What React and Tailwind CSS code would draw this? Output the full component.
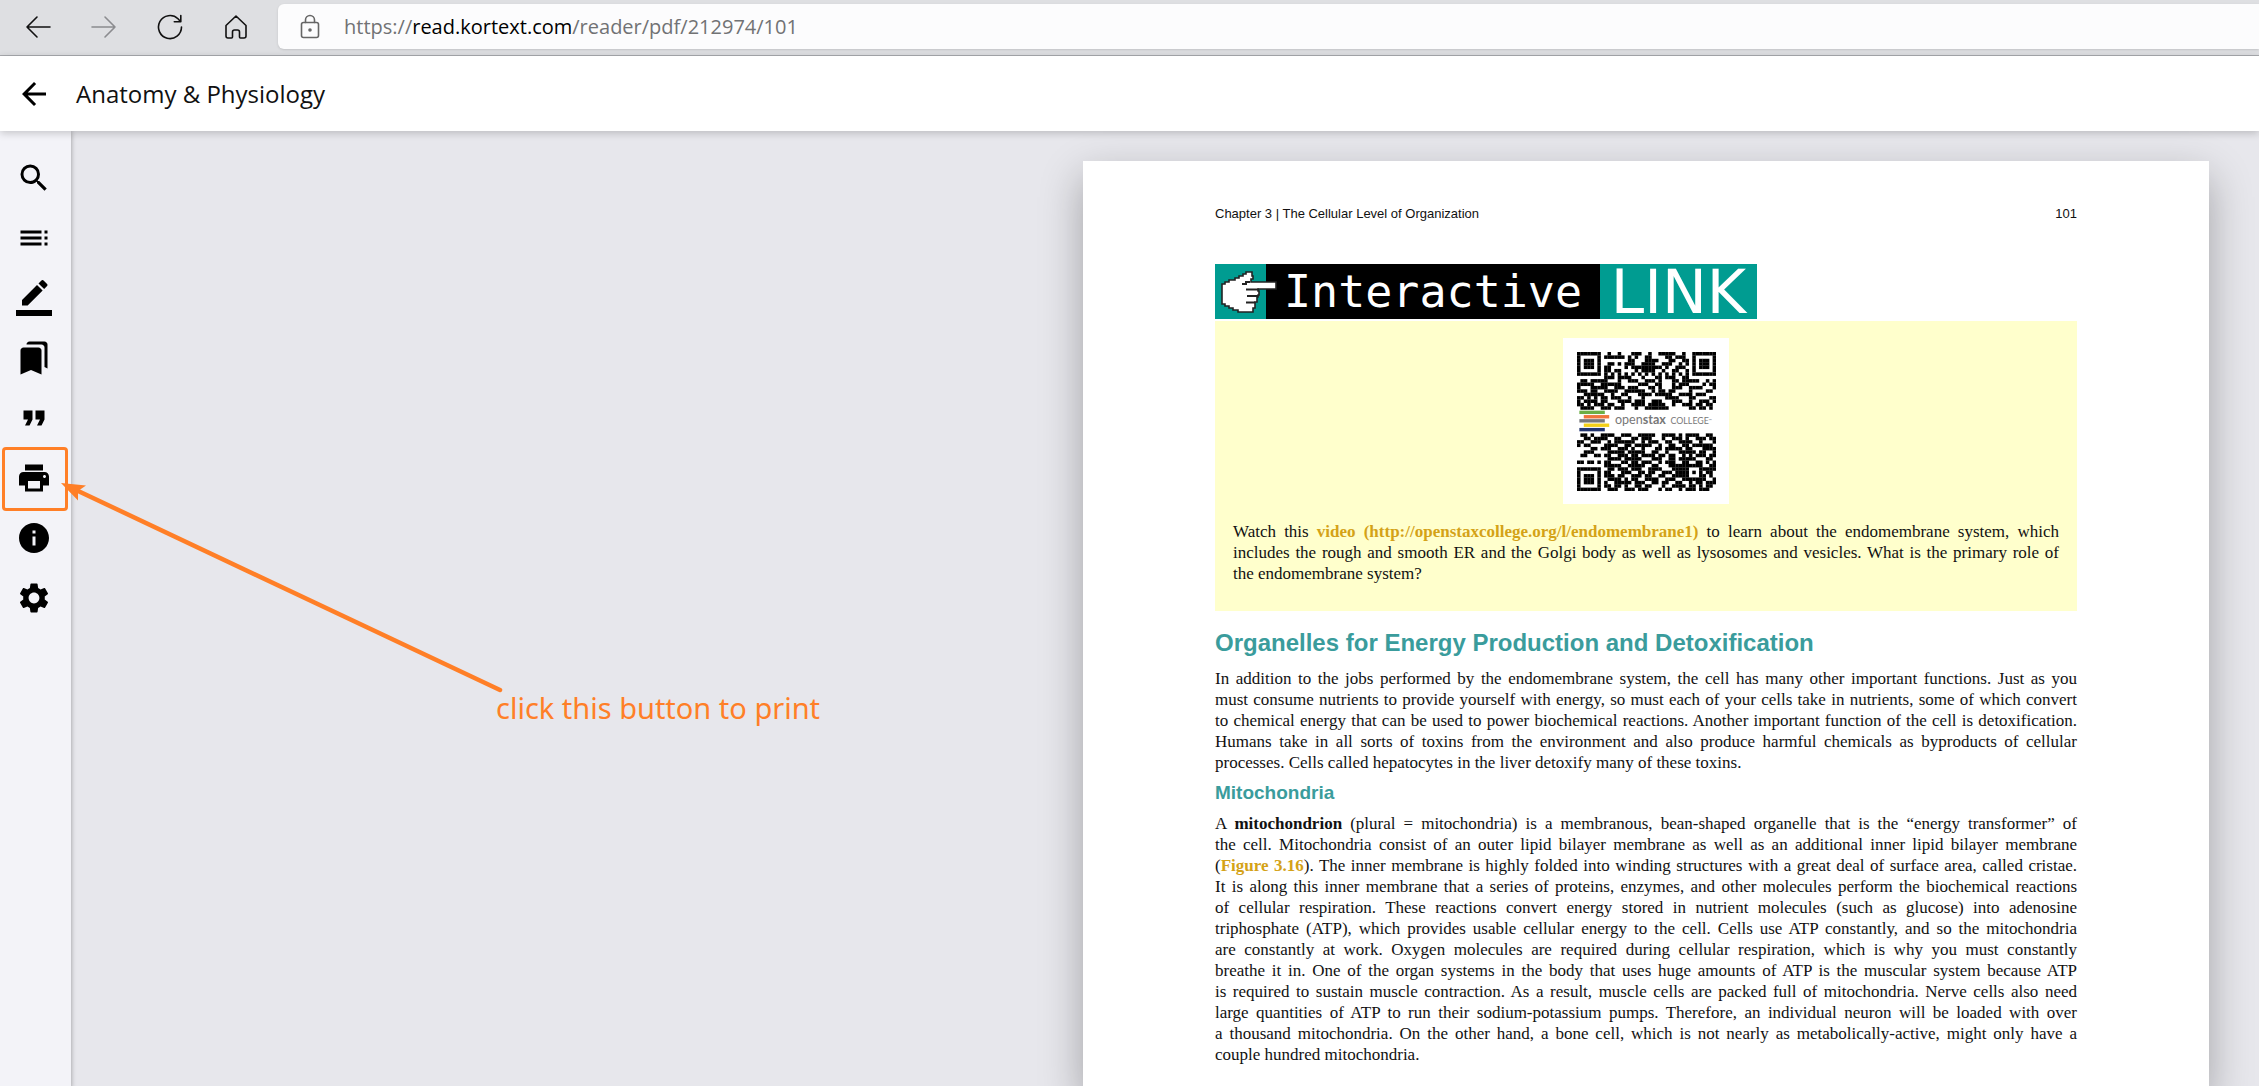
import {
  MdSearch,
  MdToc,
  MdBookmarks,
  MdFormatQuote,
  MdPrint,
  MdInfo,
  MdSettings,
  MdArrowBack,
} from "react-icons/md";

function PenIcon({ className }) {
  return (
    <svg viewBox="0 0 24 24" className={className} fill="currentColor" aria-hidden="true">
      <path d="M17.750 7 14 3.250l-10 10V17h3.750l10-10zm2.960-2.960c.39-.39.39-1.020 0-1.410L18.370.29c-.39-.39-1.020-.39-1.410 0L15 2.250 18.750 6l1.960-1.960z" />
      <path d="M0 20h24v4H0z" />
    </svg>
  );
}

const tools = [
  { label: "Search", Icon: MdSearch },
  { label: "Contents", Icon: MdToc },
  { label: "Highlights", Icon: PenIcon },
  { label: "Bookmarks", Icon: MdBookmarks },
  { label: "Cite", Icon: MdFormatQuote },
  { label: "Print", Icon: MdPrint },
  { label: "Info", Icon: MdInfo },
  { label: "Settings", Icon: MdSettings },
];

const QR_TOP = [
  "11111110010010001110010011111001001111111",
  "10000010111111010100110000110111001000001",
  "10111010000000011000111100011001101011101",
  "10111010011010111001111001110010101011101",
  "10111010110000101111111110100111001011101",
  "10000010110110000101111001001100101000001",
  "11111110101010101010101010101010101111111",
  "00000000111011110001000110111001100000000",
  "01101111100010011100111010001101111100101",
  "11111001111110000011100110001011100001011",
  "10001111100111011100011010001110011110001",
  "11101100111100111111001011011000010000110",
  "00111111001001100011110111110011110111000",
  "11010101101110010001000000111100011000011",
  "10111101100011110111001110001110010011101",
  "11010111011001001111011111001001110110110",
  "01111001110111000100111111100000011011010",
];

const QR_BOTTOM = [
  "01101001111001110011111001111010111100110",
  "00110111100110001101110001001110100111011",
  "11001110010111111001011100110011110010001",
  "10110000111100110111110010011001101111110",
  "00001101110011101001000110111110110001111",
  "00111000011111011111001100100011111011001",
  "01100110110011101101111011011001010111011",
  "00000000011110111110001110011011111000110",
  "11011010110001101101110010111001100110101",
  "00000000111110011111001100011111111110011",
  "11111110011011101110011110001111100011111",
  "10000010110001110011011001110111101010110",
  "10111010111011001110110011001111100011010",
  "10111010011110101100111100111001111111001",
  "10111010100111110111001101100110010110111",
  "10000010110110100110110001001111011010110",
  "11111110011100111011100010110010111011100",
];

function QrCode() {
  const row = (line, y) =>
    [...line].map((c, x) => (c === "1" ? <rect key={`${x}-${y}`} x={x} y={y} width="1.04" height="1.04" /> : null));
  return (
    <svg viewBox="0 0 41 41" className="block h-[139px] w-[139px]" role="img" aria-label="QR code">
      {QR_TOP.map((line, i) => row(line, i))}
      {QR_BOTTOM.map((line, i) => row(line, i + 24))}
      <rect x="0.7" y="17.3" width="7.5" height="1" fill="#6cae45" />
      <rect x="2" y="18.6" width="7.5" height="1" fill="#f0743c" />
      <rect x="0.7" y="19.8" width="7.5" height="1" fill="#77787b" />
      <rect x="2" y="21.1" width="7.5" height="1" fill="#f4d019" />
      <rect x="0.7" y="22.4" width="7.5" height="1" fill="#22356f" />
      <text x="11.2" y="21.3" fontSize="3.7" fill="#777" fontFamily="Lato, sans-serif">
        open<tspan fontWeight="700">stax</tspan>
      </text>
      <text x="27.6" y="21.3" fontSize="2.6" fill="#777" fontFamily="Lato, sans-serif">
        COLLEGE<tspan fontSize="1.2" dy="-0.8">™</tspan>
      </text>
    </svg>
  );
}

function Hand() {
  return (
    <svg viewBox="0 0 57 44" className="absolute top-[7px] left-[6px] h-11 w-[57px]" aria-hidden="true">
      <path
        d="M1 13H4V11H8V9H14V7H18V5H22V3H25V1H31V5H32V8H30V11H55V18H37V20H38V24H37V26H36V31H34V37H32V41H17V39H12V37H8V35H4V33H1Z"
        fill="#fff"
        stroke="#222"
        strokeWidth="1.6"
      />
      <path d="M25 18.500h13M26 25h11M25 31.500h9M29 11h-4v2h-4" fill="none" stroke="#222" strokeWidth="2" />
    </svg>
  );
}

function BrowserBar() {
  const line = { fill: "none", stroke: "currentColor", strokeWidth: 1.6, strokeLinecap: "round", strokeLinejoin: "round" };
  return (
    <div className="flex h-14 items-center border-b border-[#a9abaf] bg-[#dedfe2] pb-0.5 pl-[5px] text-[#111]">
      <button type="button" aria-label="Back" className="flex w-[66px] justify-center">
        <svg viewBox="0 0 26 26" className="size-[26px]" {...line}>
          <path d="M25 13H2M12 3 2 13l10 10" />
        </svg>
      </button>
      <button type="button" aria-label="Forward" className="flex w-[66px] justify-center text-[#8b8c8f]">
        <svg viewBox="0 0 26 26" className="size-[26px]" {...line}>
          <path d="M1 13h23M14 3l10 10-10 10" />
        </svg>
      </button>
      <button type="button" aria-label="Refresh" className="flex w-[66px] justify-center">
        <svg viewBox="0 0 26 26" className="size-[26px]" {...line}>
          <path d="M24.500 13a11.500 11.500 0 1 1-3.500-8.200L23.500 7.500M23.800 1.500v6.200h-6.500" />
        </svg>
      </button>
      <button type="button" aria-label="Home" className="flex w-[66px] justify-center">
        <svg viewBox="0 0 26 26" className="size-[26px]" {...line}>
          <path d="M3 11.500 13 2l10 9.500V22q0 2-2 2h-3.500q-1 0-1-1v-5q0-2-2-2h-3q-2 0-2 2v5q0 1-1 1H5q-2 0-2-2z" />
        </svg>
      </button>
      <div className="ml-[9px] flex h-[45px] flex-1 items-center rounded-l-md bg-[#fcfcfd] pl-5 shadow-sm">
        <svg viewBox="0 0 24 26" className="h-[26px] w-6 text-[#666]" {...line}>
          <rect x="3.500" y="8.500" width="17" height="15" rx="2" />
          <path d="M7.500 8.500V6a4.500 4.500 0 0 1 9 0v2.500" />
          <circle cx="12" cy="16" r="1" fill="currentColor" />
        </svg>
        <p className="ml-[22px] font-['Open_Sans',sans-serif] text-[20px] text-[#717274]">
          https://<span className="text-black">read.kortext.com</span>/reader/pdf/212974/101
        </p>
      </div>
    </div>
  );
}

function Sidebar() {
  return (
    <nav className="relative z-10 flex w-[71px] shrink-0 flex-col bg-[#f3f3f8] pt-[17px] pr-1 shadow-[0_0_5px_rgba(0,0,0,0.35)]">
      {tools.map(({ label, Icon }) => (
        <button key={label} type="button" aria-label={label} className="flex h-[60px] items-center justify-center text-black">
          <Icon className="size-9" />
        </button>
      ))}
    </nav>
  );
}

function Annotation() {
  return (
    <div className="pointer-events-none absolute inset-0 z-20 text-[#ff7f27]">
      <div className="absolute top-[316px] left-[2px] h-[64px] w-[66px] rounded-sm border-3 border-[#ff7f27]" />
      <svg viewBox="0 0 450 220" className="absolute top-[344px] left-[58px] h-[220px] w-[450px]" aria-hidden="true">
        <path d="M18 15 442 215" stroke="currentColor" strokeWidth="4.500" strokeLinecap="round" />
        <path d="M3 8 28 10.500 20 16 20 25.500Z" fill="currentColor" />
      </svg>
      <p className="absolute top-[556px] left-[496px] font-['Noto_Sans',sans-serif] text-[29px] leading-[42px] whitespace-nowrap">
        click this button to print
      </p>
    </div>
  );
}

// The book's own line breaks are kept, every line but the last is justified
function Lines({ className = "", lines }) {
  return (
    <p className={className}>
      {lines.map((line, i) => (
        <span key={i} className={i < lines.length - 1 ? "block text-justify [text-align-last:justify]" : "block"}>
          {line}
        </span>
      ))}
    </p>
  );
}

const introLines = [
  "In addition to the jobs performed by the endomembrane system, the cell has many other important functions. Just as you",
  "must consume nutrients to provide yourself with energy, so must each of your cells take in nutrients, some of which convert",
  "to chemical energy that can be used to power biochemical reactions. Another important function of the cell is detoxification.",
  "Humans take in all sorts of toxins from the environment and also produce harmful chemicals as byproducts of cellular",
  "processes. Cells called hepatocytes in the liver detoxify many of these toxins.",
];

const videoLines = [
  <>
    Watch this{" "}
    <a href="http://openstaxcollege.org/l/endomembrane1" className="font-bold text-[#d4a217]">
      video (http://openstaxcollege.org/l/endomembrane1)
    </a>{" "}
    to learn about the endomembrane system, which
  </>,
  "includes the rough and smooth ER and the Golgi body as well as lysosomes and vesicles. What is the primary role of",
  "the endomembrane system?",
];

const mitochondriaLines = [
  <>
    A <b>mitochondrion</b> (plural = mitochondria) is a membranous, bean-shaped organelle that is the “energy transformer” of
  </>,
  "the cell. Mitochondria consist of an outer lipid bilayer membrane as well as an additional inner lipid bilayer membrane",
  <>
    (
    <a href="#figure-3-16" className="font-bold text-[#d4a217]">
      Figure 3.16
    </a>
    ). The inner membrane is highly folded into winding structures with a great deal of surface area, called cristae.
  </>,
  "It is along this inner membrane that a series of proteins, enzymes, and other molecules perform the biochemical reactions",
  "of cellular respiration. These reactions convert energy stored in nutrient molecules (such as glucose) into adenosine",
  "triphosphate (ATP), which provides usable cellular energy to the cell. Cells use ATP constantly, and so the mitochondria",
  "are constantly at work. Oxygen molecules are required during cellular respiration, which is why you must constantly",
  "breathe it in. One of the organ systems in the body that uses huge amounts of ATP is the muscular system because ATP",
  "is required to sustain muscle contraction. As a result, muscle cells are packed full of mitochondria. Nerve cells also need",
  "large quantities of ATP to run their sodium-potassium pumps. Therefore, an individual neuron will be loaded with over",
  "a thousand mitochondria. On the other hand, a bone cell, which is not nearly as metabolically-active, might only have a",
  "couple hundred mitochondria.",
];

function BookPage() {
  return (
    <article className="w-[1126px] bg-white px-[132px] pt-[45px] pb-6 font-['Liberation_Serif',serif] text-[17px] leading-[21px] text-[#111] shadow-[0_16px_40px_rgba(0,0,0,0.3)]">
      <div className="flex justify-between font-['Liberation_Sans',sans-serif] text-[13px] leading-4">
        <span>Chapter 3 | The Cellular Level of Organization</span>
        <span>101</span>
      </div>

      <div className="relative mt-[42px] flex h-[55px] w-[542px] text-white">
        <div className="w-[51px] bg-[#009c91]" />
        <div className="flex flex-1 items-center bg-black pl-[18px] font-['DejaVu_Sans_Mono',monospace] text-[45px] leading-[55px]">
          Interactive
        </div>
        <div className="flex w-[157px] items-center justify-center bg-[#009c91] pt-0.5 font-['DejaVu_Sans',sans-serif] text-[60px] leading-[55px]">
          LINK
        </div>
        <Hand />
      </div>

      <section className="mt-0.5 bg-[#ffffcc] px-[18px] pt-[17px] pb-[27px]">
        <div className="mx-auto flex size-[166px] items-center justify-center bg-white">
          <QrCode />
        </div>
        <Lines className="mt-[17px]" lines={videoLines} />
      </section>

      <h2 className="mt-[18px] font-['Liberation_Sans',sans-serif] text-[24px] leading-7 font-bold text-[#3a9c9c]">
        Organelles for Energy Production and Detoxification
      </h2>
      <Lines className="mt-[11px]" lines={introLines} />

      <h3 className="mt-2 font-['Liberation_Sans',sans-serif] text-[19px] leading-6 font-bold text-[#3a9c9c]">Mitochondria</h3>
      <Lines className="mt-2" lines={mitochondriaLines} />
    </article>
  );
}

export default function App() {
  return (
    <div className="flex min-h-screen flex-col bg-[#e7e7ec]">
      <BrowserBar />
      <header className="relative z-30 flex h-[75px] items-center bg-white pl-4 shadow-[0_2px_8px_rgba(0,0,0,0.2)]">
        <button type="button" aria-label="Back to library" className="text-black">
          <MdArrowBack className="size-9" />
        </button>
        <h1 className="ml-6 font-['Open_Sans',sans-serif] text-[24px] text-[#111]">Anatomy &amp; Physiology</h1>
      </header>
      <div className="relative flex flex-1">
        <Sidebar />
        <main className="flex min-w-0 flex-1 justify-end overflow-hidden pt-[30px] pr-[50px]">
          <BookPage />
        </main>
        <Annotation />
      </div>
    </div>
  );
}
